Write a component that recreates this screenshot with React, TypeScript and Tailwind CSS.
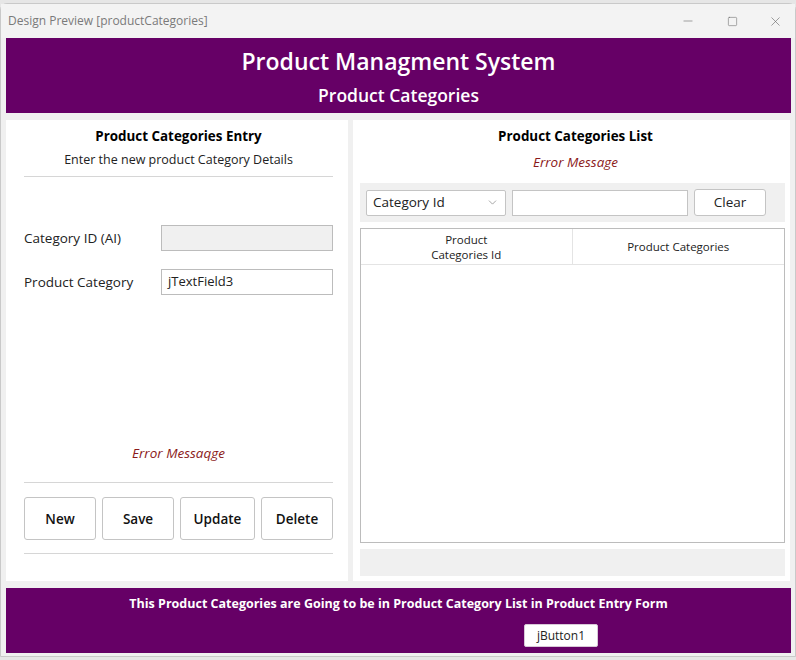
import { ChevronDown, Minus, Square, X } from 'lucide-react';

const font = { fontFamily: '"Open Sans", "Noto Sans", sans-serif' };

function ActionButton({ label, width }: { label: string; width: string }) {
  return (
    <button
      type="button"
      className={`${width} h-[43px] rounded-[3px] border border-[#c4c4c4] bg-white text-[13.5px] font-semibold text-[#111]`}
    >
      {label}
    </button>
  );
}

function EntryPanel() {
  return (
    <div className="flex w-[342px] flex-col bg-white pl-[18px] pr-[15px]">
      <div className="pt-[7px] text-center text-[13.4px] font-bold leading-[18px] text-black">
        Product Categories Entry
      </div>
      <div className="mt-[6px] text-center text-[12.5px] leading-[17px] text-[#222]">
        Enter the new product Category Details
      </div>
      <div className="mt-[8px] h-px bg-[#d6d6d6]" />

      <div className="mt-[48px] flex items-center justify-between">
        <span className="text-[13.5px] text-[#222]">Category ID (AI)</span>
        <div className="h-[26px] w-[172px] border border-[#bcbcbc] bg-[#f0f0f0]" />
      </div>
      <div className="mt-[18px] flex items-center justify-between">
        <span className="text-[13.5px] text-[#222]">Product Category</span>
        <div className="flex h-[26px] w-[172px] items-center border border-[#bcbcbc] bg-white px-[6px] text-[13px] text-[#222]">
          jTextField3
        </div>
      </div>

      <div className="mt-[148px] text-center text-[13.5px] italic text-[#8b1a1a]">Error Messaqge</div>
      <div className="mt-[19px] h-px bg-[#d6d6d6]" />
      <div className="mt-[14px] flex gap-[6px]">
        <ActionButton label="New" width="w-[72px]" />
        <ActionButton label="Save" width="w-[72px]" />
        <ActionButton label="Update" width="w-[75px]" />
        <ActionButton label="Delete" width="w-[72px]" />
      </div>
      <div className="mt-[13px] h-px bg-[#d6d6d6]" />
    </div>
  );
}

function ListPanel() {
  return (
    <div className="flex w-[437px] flex-col bg-white pl-[7px] pr-[5px]">
      <div className="ml-[6px] pt-[7px] text-center text-[13.4px] font-bold leading-[18px] text-black">
        Product Categories List
      </div>
      <div className="ml-[6px] mt-[8px] text-center text-[13.5px] italic leading-[18px] text-[#8b1a1a]">
        Error Message
      </div>

      <div className="mt-[12px] flex h-[39px] items-center gap-[6px] bg-[#f0f0f0] px-[6px]">
        <div className="flex h-[26px] w-[140px] items-center justify-between rounded-[2px] border border-[#c4c4c4] bg-white pl-[6px] pr-[6px] text-[13.5px] text-[#222]">
          <span>Category Id</span>
          <ChevronDown size={13} strokeWidth={1.2} className="text-[#777]" />
        </div>
        <div className="h-[26px] w-[176px] border border-[#c4c4c4] bg-white" />
        <button
          type="button"
          className="h-[27px] w-[72px] rounded-[3px] border border-[#c4c4c4] bg-white text-[13.5px] text-[#222]"
        >
          Clear
        </button>
      </div>

      <div className="mt-[6px] flex h-[315px] flex-col border border-[#bcbcbc]">
        <div className="grid h-[36px] grid-cols-2 border-b border-[#e4e4e4] text-[11.5px] leading-[15px] text-[#222]">
          <div className="flex items-center justify-center border-r border-[#e4e4e4] text-center">
            Product
            <br />
            Categories Id
          </div>
          <div className="flex items-center justify-center">Product Categories</div>
        </div>
      </div>

      <div className="mt-[6px] h-[27px] bg-[#f0f0f0]" />
    </div>
  );
}

export default function App() {
  return (
    <div className="relative h-[660px] w-[796px] overflow-hidden bg-[#e6e6e6] pt-[3px]" style={font}>
      <div className="flex h-[654px] flex-col rounded-t-[7px] border border-[#c9c9c9] bg-[#f0f0f0]">
        {/* title bar */}
        <div className="flex h-[34px] items-center justify-between bg-[#f3f3f3] pl-[7px]">
          <span className="text-[12px] text-[#7a7a7a]">Design Preview [productCategories]</span>
          <div className="flex items-center text-[#666]">
            <div className="flex w-[45px] justify-center">
              <Minus size={14} strokeWidth={1} />
            </div>
            <div className="flex w-[45px] justify-center">
              <Square size={11} strokeWidth={1.2} />
            </div>
            <div className="flex w-[40px] justify-center">
              <X size={15} strokeWidth={1} />
            </div>
          </div>
        </div>

        <div className="flex flex-col pl-[5px] pr-[4px]">
          <div className="flex h-[75px] flex-col items-center bg-[#660066] text-white">
            <div className="mt-[7px] text-[23px] font-semibold leading-[32px]">Product Managment System</div>
            <div className="mt-[6px] text-[17.5px] font-semibold leading-[24px]">Product Categories</div>
          </div>

          <div className="mt-[7px] flex h-[461px] gap-[5px]">
            <EntryPanel />
            <ListPanel />
          </div>

          <div className="mt-[7px] flex h-[65px] flex-col items-center bg-[#660066]">
            <div className="mt-[7px] text-[12.5px] font-bold leading-[18px] text-white">
              This Product Categories are Going to be in Product Category List in Product Entry Form
            </div>
            <button
              type="button"
              className="ml-[518px] mt-[11px] h-[23px] w-[74px] self-start rounded-[2px] border border-[#d8c8d8] bg-white text-[12px] text-[#222]"
            >
              jButton1
            </button>
          </div>
        </div>
      </div>
    </div>
  );
}
